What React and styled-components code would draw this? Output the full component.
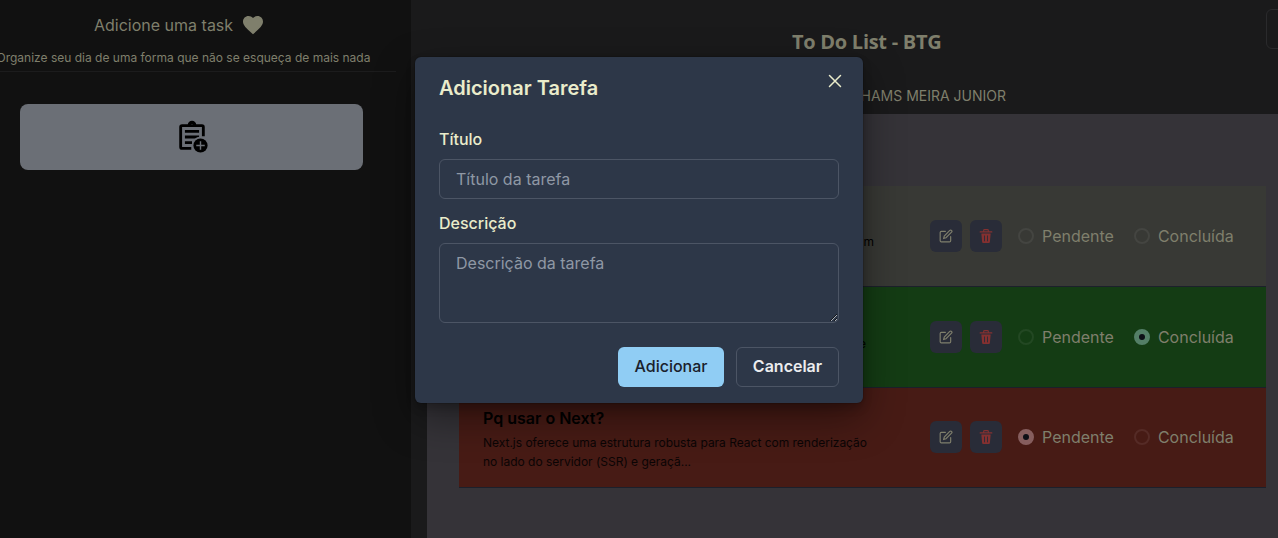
import React from 'react';
import styled, { createGlobalStyle } from 'styled-components';
import { MdFavorite } from 'react-icons/md';

const Global = createGlobalStyle`
  *, *::before, *::after { box-sizing: border-box; }
  body { margin: 0; overflow: hidden; background: #1a1a1b; font-family: Inter, sans-serif; color: #7f7f6c; font-size: 16px; line-height: 24px; }
  h1, h2, h3, p { margin: 0; }
  button, input, textarea { font: inherit; }
`;

const Page = styled.div`
  display: flex;
  width: 1278px;
  height: 538px;
  overflow: hidden;
`;
const Sidebar = styled.aside`
  width: 411px;
  flex: none;
  background: #111111;
`;
const SidebarHead = styled.header`
  width: 396px;
  height: 72px;
  border-bottom: 1px solid #1c1c1d;
`;
const SidebarTitle = styled.h2`
  display: flex;
  align-items: center;
  gap: 8px;
  padding: 13px 0 0 94px;
  font-size: 16px;
  font-weight: 400;
  line-height: 24px;
`;
const SidebarText = styled.p`
  margin: 11px 0 0 -3.5px;
  font-size: 12px;
  line-height: 20px;
  white-space: nowrap;
`;
const AddButton = styled.button`
  display: flex;
  align-items: center;
  justify-content: center;
  width: 343px;
  height: 66px;
  margin: 32px 0 0 20px;
  padding: 0;
  border: 0;
  border-radius: 8px;
  background: #6b6f76;
  color: #000;
`;
const Main = styled.main`
  flex: 1;
  min-width: 0;
  display: flex;
  flex-direction: column;
`;
const TopBar = styled.header`
  height: 114px;
  flex: none;
  display: grid;
  grid-template-columns: 1fr 12px;
`;
const Heading = styled.div`
  padding-top: 27px;
`;
const AppTitle = styled.h1`
  padding-left: 381px;
  font: 700 20px/30px 'Open Sans', 'Noto Sans', sans-serif;
  letter-spacing: -0.28px;
`;
const Author = styled.p`
  width: 595px;
  margin-top: 29px;
  font-size: 14px;
  line-height: 20px;
  text-align: right;
  white-space: nowrap;
`;
const CornerButton = styled.button`
  width: 40px;
  height: 40px;
  margin-top: 9px;
  border: 1px solid #2a2a2c;
  border-radius: 6px;
  background: transparent;
`;
const Board = styled.section`
  flex: 1;
  margin-left: 16px;
  padding: 72px 12px 0 32px;
  background: #353338;
`;
const tones = { idle: '#383935', done: '#143c14', open: '#471b15' };
const Row = styled.article`
  display: flex;
  align-items: center;
  height: ${(p) => p.$height}px;
  padding: 0 32px ${(p) => (p.$tone === 'open' ? 1 : 0)}px 24px;
  border-bottom: 1px solid #1c202b;
  background: ${(p) => tones[p.$tone]};
`;
const RowText = styled.div`
  width: 390px;
  margin-right: 57px;
  color: #000;
  padding-top: 2px;
`;
const RowTitle = styled.h3`
  font-size: 16px;
  font-weight: 600;
  line-height: 24px;
`;
const RowDescription = styled.p`
  margin-top: 3px;
  font-size: 12px;
  line-height: 19px;
  letter-spacing: -0.015px;
  color: #0b0505;
  white-space: pre;
`;
const IconButton = styled.button`
  display: flex;
  align-items: center;
  justify-content: center;
  width: 32px;
  height: 32px;
  margin-right: 8px;
  padding: 0;
  border: 0;
  border-radius: 6px;
  background: #292c38;
  color: ${(p) => (p.$danger ? '#843030' : '#7f7f6c')};
`;
const Option = styled.label`
  display: flex;
  align-items: center;
  gap: 8px;
  margin-left: ${(p) => (p.$first ? 8 : 20)}px;
`;
const Radio = styled.span`
  display: flex;
  align-items: center;
  justify-content: center;
  width: 16px;
  height: 16px;
  border: 2px solid ${(p) => p.$ring};
  border-radius: 50%;
  background: ${(p) => (p.$on ? p.$ring : 'transparent')};
  &::before {
    content: '';
    width: 6px;
    height: 6px;
    border-radius: 50%;
    background: ${(p) => (p.$on ? '#0d0f16' : 'transparent')};
  }
`;
const Dialog = styled.div`
  position: absolute;
  left: 415px;
  top: 57px;
  width: 448px;
  height: 346px;
  border-radius: 6px;
  background: #2d3748;
  color: #eaeccb;
  box-shadow: rgba(0, 0, 0, 0.1) 0 0 0 1px, rgba(0, 0, 0, 0.2) 0 5px 10px, rgba(0, 0, 0, 0.4) 0 15px 40px;
`;
const DialogHead = styled.header`
  display: flex;
  justify-content: space-between;
  padding: 16px 12px 0 24px;
`;
const DialogTitle = styled.h2`
  font-size: 20px;
  font-weight: 600;
  line-height: 30px;
`;
const CloseButton = styled.button`
  display: flex;
  align-items: center;
  justify-content: center;
  width: 32px;
  height: 32px;
  margin-top: -8px;
  padding: 0;
  border: 0;
  background: transparent;
  color: inherit;
`;
const Form = styled.form`
  padding: 24px 24px 0;
`;
const Label = styled.label`
  display: block;
  margin: ${(p) => (p.$next ? 12 : 0)}px 0 8px;
  font-weight: 500;
  line-height: 24px;
`;
const Input = styled.input`
  display: block;
  width: 100%;
  height: 40px;
  padding: 0 16px;
  border: 1px solid #4c5565;
  border-radius: 6px;
  background: transparent;
  &::placeholder { color: #8f98a5; opacity: 1; }
`;
const TextArea = styled.textarea`
  display: block;
  width: 100%;
  height: 80px;
  padding: 8px 16px;
  border: 1px solid #4c5565;
  border-radius: 6px;
  background: transparent;
  line-height: 22px;
  resize: vertical;
  color-scheme: dark;
  &::placeholder { color: #8f98a5; opacity: 1; }
`;
const Actions = styled.div`
  display: flex;
  justify-content: flex-end;
  gap: 12px;
  margin-top: 24px;
`;
const Action = styled.button`
  width: ${(p) => (p.$primary ? 106 : 103)}px;
  height: 40px;
  padding: 0 0 2px;
  border: ${(p) => (p.$primary ? '0' : '1px solid #4c5565')};
  border-radius: 6px;
  background: ${(p) => (p.$primary ? '#90cdf4' : 'transparent')};
  color: ${(p) => (p.$primary ? '#1a202c' : '#ebecee')};
  font-weight: ${(p) => (p.$primary ? 500 : 600)};
`;

const ClipboardAddIcon = () => (
  <svg width="34" height="34" viewBox="0 0 24 24" fill="none" stroke="currentColor" strokeWidth="2">
    <path d="M20 11.5V5a1 1 0 0 0-1-1H5a1 1 0 0 0-1 1v14a1 1 0 0 0 1 1h6.5" />
    <path d="M7 8h10M7 12h10M7 16h5" />
    <path fill="currentColor" stroke="none" fillRule="evenodd" d="M9 3.5a3 3 0 0 1 6 0zM12 2.75a.75.75 0 1 0 0 1.5.75.75 0 0 0 0-1.5z" />
    <circle cx="18" cy="18" r="6.3" fill="#6b6f76" stroke="none" />
    <circle cx="18" cy="18" r="5" fill="currentColor" stroke="none" />
    <path d="M15 18h6M18 15v6" stroke="#6b6f76" strokeWidth="1" />
  </svg>
);
const EditIcon = () => (
  <svg width="14" height="14" viewBox="0 0 24 24" fill="none" stroke="currentColor" strokeLinecap="round" strokeWidth="2">
    <path d="M11 4H4a2 2 0 0 0-2 2v14a2 2 0 0 0 2 2h14a2 2 0 0 0 2-2v-7" />
    <path d="M18.5 2.5a2.121 2.121 0 0 1 3 3L12 15l-4 1 1-4 9.5-9.5z" />
  </svg>
);
const DeleteIcon = () => (
  <svg width="14" height="14" viewBox="0 0 24 24" fill="currentColor">
    <path d="M19.452 7.5H4.547a.5.5 0 00-.5.545l1.287 14.136A2 2 0 007.326 24h9.347a2 2 0 001.992-1.819L19.95 8.045a.5.5 0 00-.129-.382.5.5 0 00-.369-.163zm-9.2 13a.75.75 0 01-1.5 0v-9a.75.75 0 011.5 0zm5 0a.75.75 0 01-1.5 0v-9a.75.75 0 011.5 0zM22 4h-4.75a.25.25 0 01-.25-.25V2.5A2.5 2.5 0 0014.5 0h-5A2.5 2.5 0 007 2.5v1.25a.25.25 0 01-.25.25H2a1 1 0 000 2h20a1 1 0 000-2zM9 3.75V2.5a.5.5 0 01.5-.5h5a.5.5 0 01.5.5v1.25a.25.25 0 01-.25.25h-5.5A.25.25 0 019 3.75z" />
  </svg>
);
const CloseIcon = () => (
  <svg width="14" height="14" viewBox="0 0 14 14" fill="none" stroke="currentColor" strokeWidth="1.5" strokeLinecap="round">
    <path d="M1.5 1.5l11 11M12.5 1.5l-11 11" />
  </svg>
);

const tasks = [
  { tone: 'idle', height: 101, ring: '#444541' },
  { tone: 'done', height: 101, ring: '#234823', on: '#547f67', status: 'Concluída' },
  {
    tone: 'open', height: 100, ring: '#552b26', on: '#865e5e', status: 'Pendente',
    title: 'Pq usar o Next?',
    text: 'Next.js oferece uma estrutura robusta para React com renderização\nno lado do servidor (SSR) e geraçã...',
  },
];
const tails = { idle: 'm', done: 'e' };
const Tail = styled.span`
  display: block;
  padding-top: ${(p) => (p.$tone === 'idle' ? 8 : 10)}px;
  text-align: right;
  font-size: 12px;
  line-height: 19px;
  margin-right: ${(p) => (p.$tone === 'idle' ? -1 : 7)}px;
`;

function TaskRow({ task }) {
  return (
    <Row $tone={task.tone} $height={task.height}>
      <RowText>
        {task.title ? (
          <>
            <RowTitle>{task.title}</RowTitle>
            <RowDescription>{task.text}</RowDescription>
          </>
        ) : (
          <Tail $tone={task.tone}>{tails[task.tone]}</Tail>
        )}
      </RowText>
      <IconButton><EditIcon /></IconButton>
      <IconButton $danger><DeleteIcon /></IconButton>
      {['Pendente', 'Concluída'].map((name, i) => {
        const on = task.status === name;
        return (
          <Option key={name} $first={i === 0}>
            <Radio $on={on} $ring={on ? task.on : task.ring} />
            {name}
          </Option>
        );
      })}
    </Row>
  );
}

export default function App() {
  return (
    <>
      <Global />
      <Page>
        <Sidebar>
          <SidebarHead>
            <SidebarTitle>Adicione uma task <MdFavorite size={24} /></SidebarTitle>
            <SidebarText>Organize seu dia de uma forma que não se esqueça de mais nada</SidebarText>
          </SidebarHead>
          <AddButton><ClipboardAddIcon /></AddButton>
        </Sidebar>
        <Main>
          <TopBar>
            <Heading>
              <AppTitle>To Do List - BTG</AppTitle>
              <Author>HAMS MEIRA JUNIOR</Author>
            </Heading>
            <CornerButton />
          </TopBar>
          <Board>
            {tasks.map((t) => <TaskRow key={t.tone} task={t} />)}
          </Board>
        </Main>
      </Page>
      <Dialog>
        <DialogHead>
          <DialogTitle>Adicionar Tarefa</DialogTitle>
          <CloseButton><CloseIcon /></CloseButton>
        </DialogHead>
        <Form>
          <Label>Título</Label>
          <Input placeholder="Título da tarefa" />
          <Label $next>Descrição</Label>
          <TextArea placeholder="Descrição da tarefa" />
          <Actions>
            <Action type="button" $primary>Adicionar</Action>
            <Action type="button">Cancelar</Action>
          </Actions>
        </Form>
      </Dialog>
    </>
  );
}
